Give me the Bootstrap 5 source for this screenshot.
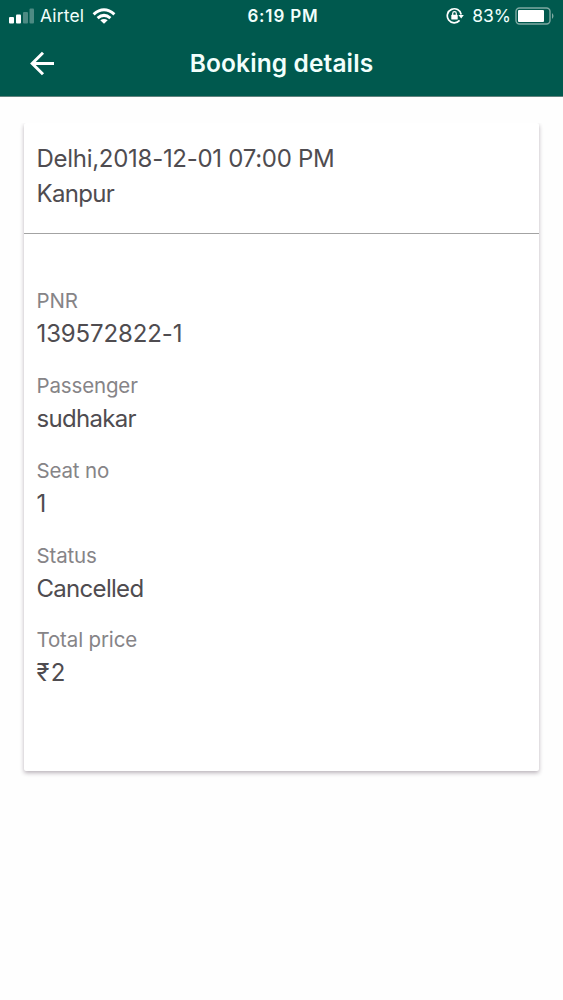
<!DOCTYPE html>
<html lang="en">
<head>
<meta charset="utf-8">
<meta name="viewport" content="width=device-width, initial-scale=1">
<title>Booking details</title>
<link href="https://cdn.jsdelivr.net/npm/bootstrap@5.3.0/dist/css/bootstrap.min.css" rel="stylesheet">
<style>
body{font-family:Inter,"Liberation Sans",sans-serif;background:#fefefe;color:#4f4c50;min-height:1000px;overflow:hidden}
.app-header{background:#00594e;color:#f2fffc;height:96.5px;border-bottom:1px solid #61827d}
.status-bar{height:32px;font-size:17.5px;line-height:32px;padding:0 8px 0 9px}
.status-bar>div{flex:1 1 0}
.carrier{margin-left:5px;letter-spacing:.15px}
.clock{font-weight:600;font-size:17px;letter-spacing:.85px;margin-left:2px}
.title-bar{height:63px}
.title-bar>div{flex:1 1 0;padding-left:29px}
.page-title{font-size:24.5px;font-weight:600;line-height:63px;letter-spacing:.12px}
.ticket{margin:26.5px 24.5px 0 24px;height:648px;border:0;border-radius:2px;background:#fff;color:inherit;box-shadow:0 2px 4px rgba(40,20,40,.32);clip-path:inset(0 -10px -10px -10px)}
.route{padding:17.5px 12.5px 22px;border-bottom:1.5px solid #a3a3a3;font-size:24px;line-height:35px;letter-spacing:-.28px}
.details{padding:51.7px 12.5px 0}
.entry{margin-bottom:18.8px}
.entry dt{font-size:20.5px;line-height:32px;font-weight:400;color:#868487;letter-spacing:-.15px}
.entry dd{font-size:24px;line-height:34px;margin:0;letter-spacing:-.12px}
.entry .word,.route .word{letter-spacing:-.7px}
.entry .price{letter-spacing:1.2px}
</style>
</head>
<body>
<header class="app-header">
  <div class="status-bar d-flex">
    <div class="d-flex align-items-center">
      <svg width="26" height="16" viewBox="0 0 26 16" fill="#fff"><rect x="0" y="9" width="5" height="6.500" rx="1"/><rect x="7" y="6.500" width="5" height="9" rx="1"/><rect x="14" y="4" width="5" height="11.500" rx="1" opacity=".3"/><rect x="20.500" y="0.500" width="4.500" height="15" rx="1" opacity=".3"/></svg>
      <span class="carrier">Airtel</span>
      <svg class="ms-2" width="24" height="17" viewBox="0 0 24 17" fill="none" stroke="#fff" stroke-width="3"><path d="M1.600 6.300Q12-2.800 22.400 6.300"/><path d="M5.600 10.200Q12 4.600 18.400 10.200"/><path d="M8.300 12.200Q12 9.600 15.700 12.200L12 15.800Z" fill="#fff" stroke="none"/></svg>
    </div>
    <span class="clock">6:19 PM</span>
    <div class="d-flex align-items-center justify-content-end">
      <svg width="18" height="18" viewBox="0 0 18 18" fill="none" stroke="#fff" stroke-width="1.700"><path d="M13.600 13.400A7 7 0 1 1 15.200 7.500"/><path d="M12.400 8h5.400l-2.600 3.500z" fill="#fff" stroke="none"/><rect x="5.300" y="7.800" width="6.400" height="4.700" rx=".6" fill="#fff" stroke="none"/><path d="M6.700 8V6.500a1.800 1.800 0 0 1 3.600 0V8" stroke-width="1.200"/></svg>
      <span class="ms-2">83%</span>
      <svg class="ms-1" width="40" height="18" viewBox="0 0 40 18"><rect x="1" y="1" width="34" height="16" rx="3.500" fill="none" stroke="#7ea9a2" stroke-width="1.400"/><rect x="3" y="3" width="26" height="12" rx="1" fill="#fff"/><path d="M37 6Q40 9 37 12Z" fill="#7ea9a2"/></svg>
    </div>
  </div>
  <div class="title-bar d-flex align-items-center">
    <div><svg class="d-block" width="26" height="26" viewBox="0 0 26 26" fill="none" stroke="#fff" stroke-width="3"><path d="M25 12.500H3.500M14 1.700L3.200 12.500L14 23.300"/></svg></div>
    <span class="page-title">Booking details</span>
    <div></div>
  </div>
</header>
<main class="card ticket">
  <section class="route">
    <div>Delhi,2018-12-01 07:00 PM</div>
    <div class="word">Kanpur</div>
  </section>
  <dl class="details mb-0">
    <div class="entry"><dt>PNR</dt><dd>139572822-1</dd></div>
    <div class="entry"><dt>Passenger</dt><dd class="word">sudhakar</dd></div>
    <div class="entry"><dt>Seat no</dt><dd>1</dd></div>
    <div class="entry"><dt>Status</dt><dd class="word">Cancelled</dd></div>
    <div class="entry"><dt>Total price</dt><dd class="price">₹2</dd></div>
  </dl>
</main>
<script src="https://cdn.jsdelivr.net/npm/bootstrap@5.3.0/dist/js/bootstrap.bundle.min.js"></script>
</body>
</html>
